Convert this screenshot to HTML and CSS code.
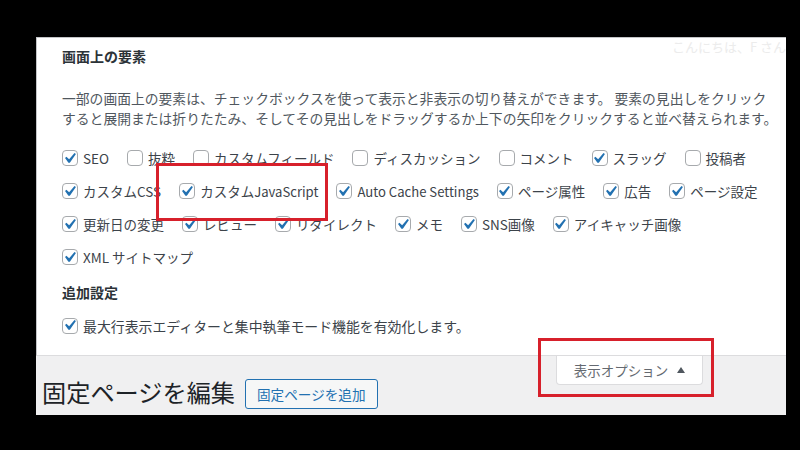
FILE: index.html
```html
<!DOCTYPE html>
<html lang="ja">
<head>
<meta charset="utf-8">
<title>表示オプション</title>
<link rel="stylesheet" href="styles.css">
</head>
<body>
<div class="screen">
  <div class="panel">
    <span class="greet">こんにちは、F さん</span>
    <h5 class="sec-title">画面上の要素</h5>
    <p class="desc">一部の画面上の要素は、チェックボックスを使って表示と非表示の切り替えができます。 要素の見出しをクリック<br>すると展開または折りたたみ、そしてその見出しをドラッグするか上下の矢印をクリックすると並べ替えられます。</p>
    <div class="prefs">
      <div class="row">
        <label class="opt"><span class="box"><svg viewBox="4.8 3.9 12.4 12.4"><path d="M14.83 4.89l1.34.94-5.81 8.38H9.02L5.78 9.67l1.34-1.25 2.57 2.4z"/></svg></span>SEO</label>
        <label class="opt"><span class="box"></span>抜粋</label>
        <label class="opt"><span class="box"></span>カスタムフィールド</label>
        <label class="opt"><span class="box"></span>ディスカッション</label>
        <label class="opt"><span class="box"></span>コメント</label>
        <label class="opt"><span class="box"><svg viewBox="4.8 3.9 12.4 12.4"><path d="M14.83 4.89l1.34.94-5.81 8.38H9.02L5.78 9.67l1.34-1.25 2.57 2.4z"/></svg></span>スラッグ</label>
        <label class="opt"><span class="box"></span>投稿者</label>
      </div>
      <div class="row">
        <label class="opt"><span class="box"><svg viewBox="4.8 3.9 12.4 12.4"><path d="M14.83 4.89l1.34.94-5.81 8.38H9.02L5.78 9.67l1.34-1.25 2.57 2.4z"/></svg></span>カスタムCSS</label>
        <label class="opt"><span class="box"><svg viewBox="4.8 3.9 12.4 12.4"><path d="M14.83 4.89l1.34.94-5.81 8.38H9.02L5.78 9.67l1.34-1.25 2.57 2.4z"/></svg></span>カスタム<span class="lat">JavaScript</span></label>
        <label class="opt"><span class="box"><svg viewBox="4.8 3.9 12.4 12.4"><path d="M14.83 4.89l1.34.94-5.81 8.38H9.02L5.78 9.67l1.34-1.25 2.57 2.4z"/></svg></span><span class="lat">Auto Cache Settings</span></label>
        <label class="opt"><span class="box"><svg viewBox="4.8 3.9 12.4 12.4"><path d="M14.83 4.89l1.34.94-5.81 8.38H9.02L5.78 9.67l1.34-1.25 2.57 2.4z"/></svg></span>ページ属性</label>
        <label class="opt"><span class="box"><svg viewBox="4.8 3.9 12.4 12.4"><path d="M14.83 4.89l1.34.94-5.81 8.38H9.02L5.78 9.67l1.34-1.25 2.57 2.4z"/></svg></span>広告</label>
        <label class="opt"><span class="box"><svg viewBox="4.8 3.9 12.4 12.4"><path d="M14.83 4.89l1.34.94-5.81 8.38H9.02L5.78 9.67l1.34-1.25 2.57 2.4z"/></svg></span>ページ設定</label>
      </div>
      <div class="row">
        <label class="opt"><span class="box"><svg viewBox="4.8 3.9 12.4 12.4"><path d="M14.83 4.89l1.34.94-5.81 8.38H9.02L5.78 9.67l1.34-1.25 2.57 2.4z"/></svg></span>更新日の変更</label>
        <label class="opt"><span class="box"><svg viewBox="4.8 3.9 12.4 12.4"><path d="M14.83 4.89l1.34.94-5.81 8.38H9.02L5.78 9.67l1.34-1.25 2.57 2.4z"/></svg></span>レビュー</label>
        <label class="opt"><span class="box"><svg viewBox="4.8 3.9 12.4 12.4"><path d="M14.83 4.89l1.34.94-5.81 8.38H9.02L5.78 9.67l1.34-1.25 2.57 2.4z"/></svg></span>リダイレクト</label>
        <label class="opt"><span class="box"><svg viewBox="4.8 3.9 12.4 12.4"><path d="M14.83 4.89l1.34.94-5.81 8.38H9.02L5.78 9.67l1.34-1.25 2.57 2.4z"/></svg></span>メモ</label>
        <label class="opt"><span class="box"><svg viewBox="4.8 3.9 12.4 12.4"><path d="M14.83 4.89l1.34.94-5.81 8.38H9.02L5.78 9.67l1.34-1.25 2.57 2.4z"/></svg></span>SNS画像</label>
        <label class="opt"><span class="box"><svg viewBox="4.8 3.9 12.4 12.4"><path d="M14.83 4.89l1.34.94-5.81 8.38H9.02L5.78 9.67l1.34-1.25 2.57 2.4z"/></svg></span>アイキャッチ画像</label>
      </div>
      <div class="row">
        <label class="opt"><span class="box"><svg viewBox="4.8 3.9 12.4 12.4"><path d="M14.83 4.89l1.34.94-5.81 8.38H9.02L5.78 9.67l1.34-1.25 2.57 2.4z"/></svg></span>XML サイトマップ</label>
      </div>
    </div>
    <h5 class="sec-title sec2">追加設定</h5>
    <div class="row row-last">
      <label class="opt opt-wide"><span class="box"><svg viewBox="4.8 3.9 12.4 12.4"><path d="M14.83 4.89l1.34.94-5.81 8.38H9.02L5.78 9.67l1.34-1.25 2.57 2.4z"/></svg></span>最大行表示エディターと集中執筆モード機能を有効化します。</label>
    </div>
  </div>
  <div class="below">
    <div class="title-group">
      <h1 class="page-title">固定ページを編集</h1>
      <a class="btn">固定ページを追加</a>
    </div>
    <div class="tab">表示オプション<span class="tri"></span></div>
  </div>
</div>
<div class="mark mark1"></div>
<div class="mark mark2"></div>
</body>
</html>
```
FILE: styles.css
```css
html, body {
  margin: 0;
  padding: 0;
}
body {
  width: 800px;
  height: 450px;
  background: #000;
  position: relative;
  overflow: hidden;
  font-family: "Noto Sans CJK JP", "Noto Sans", sans-serif;
}
.screen {
  margin: 37px 14px 0 36px;
  height: 378px;
  display: flex;
  flex-direction: column;
  background: #f0f0f1;
}
.panel {
  position: relative;
  overflow: hidden;
  background: #fff;
  border-top: 1px solid #c3c4c7;
  border-left: 1px solid #c3c4c7;
  border-bottom: 1px solid #dcdcde;
  height: 319px;
  box-sizing: border-box;
  padding: 8px 0 0 25px;
}
.greet {
  position: absolute;
  left: 635px;
  top: 0;
  font-size: 13px;
  line-height: 18px;
  color: #ececec;
  white-space: nowrap;
}
.sec-title {
  margin: 0;
  font-size: 14px;
  font-weight: 700;
  line-height: 20px;
  color: #2c3338;
}
.desc {
  margin: 22px 0 0;
  font-size: 13.8px;
  line-height: 20px;
  color: #50575e;
  white-space: nowrap;
}
.prefs {
  margin-top: 13.5px;
}
.row {
  display: flex;
  align-items: center;
  height: 33px;
}
.opt {
  display: flex;
  align-items: center;
  margin-right: 18px;
  font-size: 13.5px;
  color: #3c434a;
  white-space: nowrap;
}
.lat {
  font-size: 13.1px;
}
.opt-wide {
  font-size: 13.9px;
}
.box {
  width: 16px;
  height: 16px;
  box-sizing: border-box;
  border: 1px solid #a7aaad;
  border-radius: 4px;
  margin-right: 5px;
  display: flex;
  align-items: center;
  justify-content: center;
  background: #fff;
  flex: none;
}
.box svg {
  width: 13px;
  height: 13px;
  fill: #2271b1;
}
.sec2 {
  margin-top: 8px;
}
.row-last {
  margin-top: 7.5px;
}
.below {
  flex: 1;
  display: flex;
  align-items: flex-start;
  padding: 0 83px 0 6px;
}
.title-group {
  display: flex;
  align-items: center;
  gap: 10px;
  margin-top: 21px;
}
.page-title {
  margin: 0 0 4px;
  font-size: 24.2px;
  font-weight: 400;
  line-height: 30px;
  color: #1d2327;
}
.btn {
  height: 30px;
  box-sizing: border-box;
  border: 1px solid #2271b1;
  border-radius: 3px;
  background: #f6f7f7;
  color: #2271b1;
  font-size: 13.6px;
  padding: 0 11px;
  display: flex;
  align-items: center;
  white-space: nowrap;
}
.tab {
  margin-left: auto;
  width: 147px;
  height: 29px;
  box-sizing: border-box;
  background: #fff;
  border: 1px solid #dcdcde;
  border-top: none;
  border-radius: 0 0 4px 4px;
  display: flex;
  align-items: center;
  justify-content: center;
  gap: 9px;
  font-size: 13.5px;
  color: #646970;
  white-space: nowrap;
}
.tri {
  width: 0;
  height: 0;
  border-left: 4.5px solid transparent;
  border-right: 4.5px solid transparent;
  border-bottom: 6px solid #50575e;
}
.mark {
  position: absolute;
  border: 3px solid #d7202b;
  box-sizing: border-box;
}
.mark1 {
  left: 156px;
  top: 163px;
  width: 172px;
  height: 58px;
}
.mark2 {
  left: 538px;
  top: 338px;
  width: 176px;
  height: 59px;
}
```
